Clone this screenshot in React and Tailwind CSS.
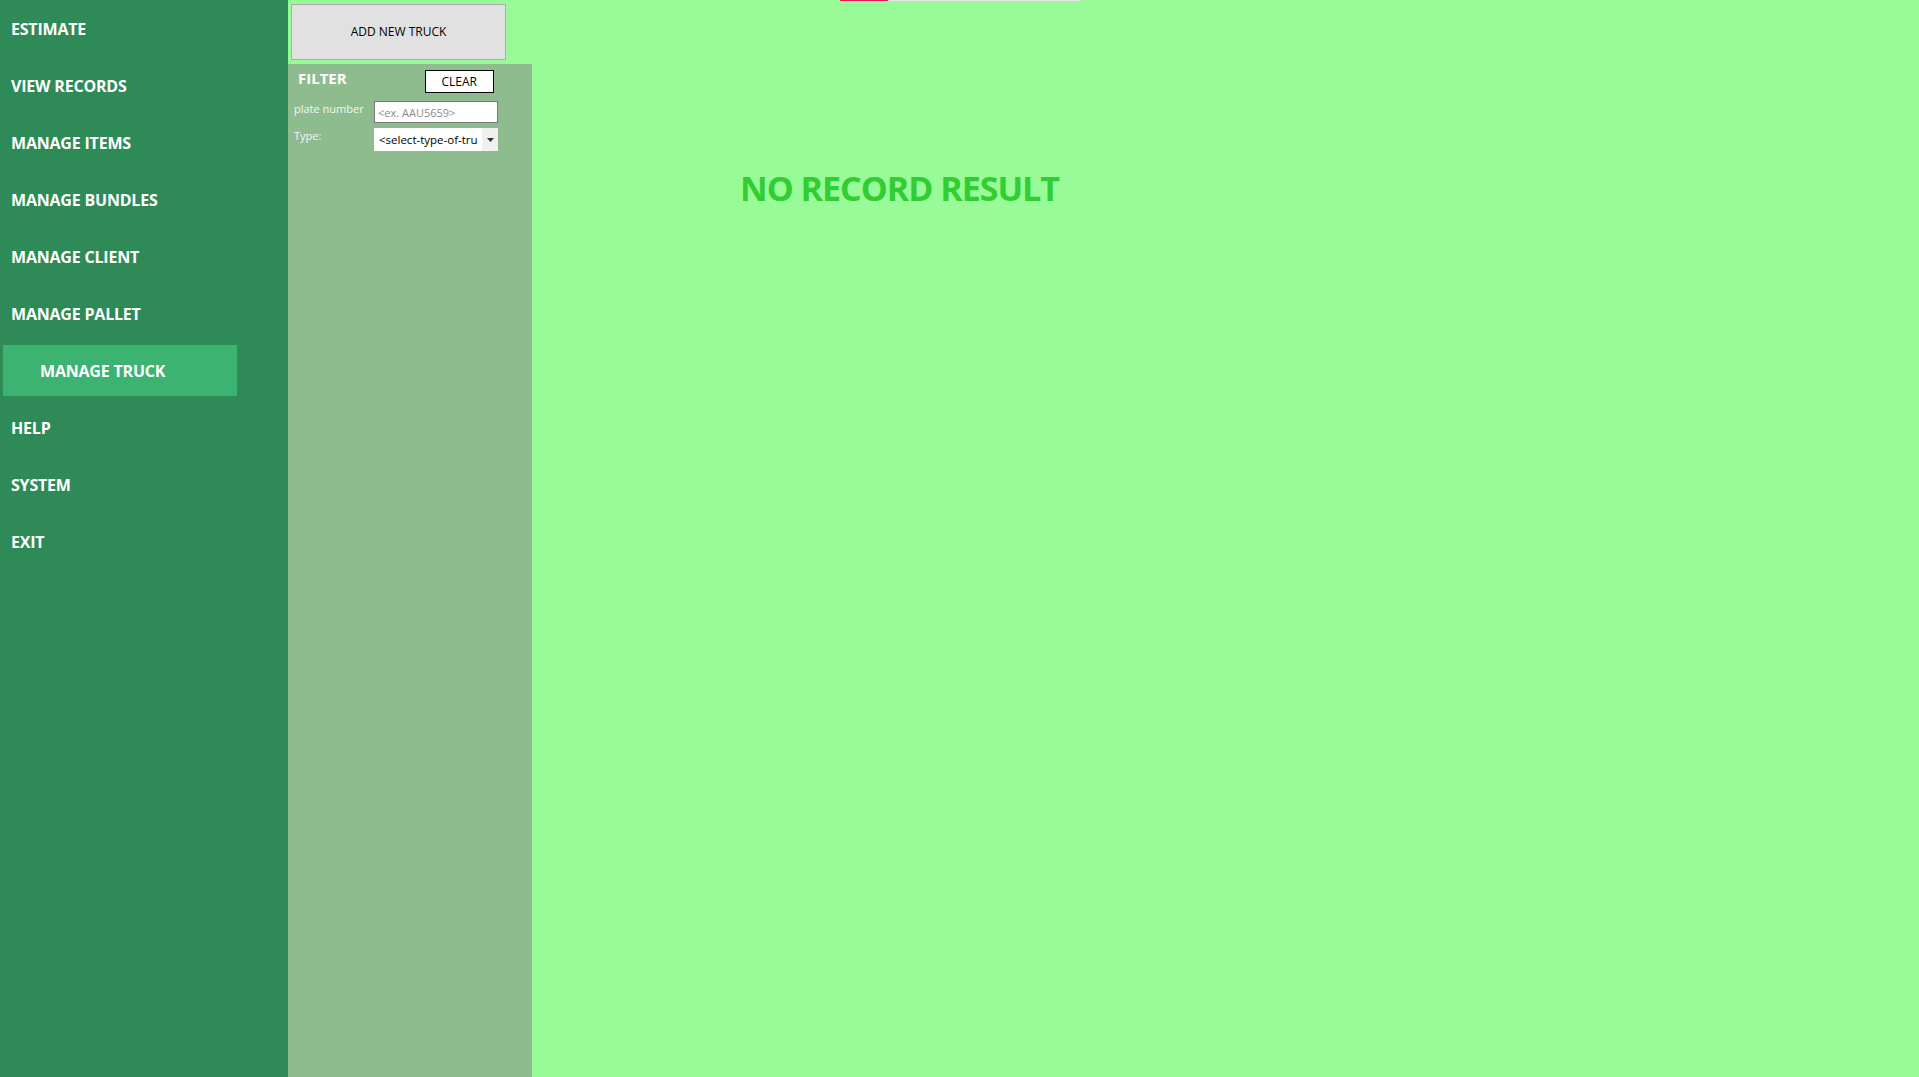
import React, { useState } from 'react';

const MENU = [
    'ESTIMATE',
    'VIEW RECORDS',
    'MANAGE ITEMS',
    'MANAGE BUNDLES',
    'MANAGE CLIENT',
    'MANAGE PALLET',
    'MANAGE TRUCK',
    'HELP',
    'SYSTEM',
    'EXIT',
];

const SideItem = ({ label, active, onClick }) => (
    <div className="h-[57px] flex items-center">
        {active ? (
            <button
                onClick={onClick}
                className="ml-[3px] w-[234px] h-[51px] bg-[#3cb371] text-left pl-[37px] text-white font-bold text-[16px] tracking-[-0.2px]"
            >
                {label}
            </button>
        ) : (
            <button onClick={onClick} className="pl-[11px] text-left text-white font-bold text-[16px] tracking-[-0.2px]">
                {label}
            </button>
        )}
    </div>
);

const App = () => {
    const [active, setActive] = useState('MANAGE TRUCK');
    const [plate, setPlate] = useState('');

    return (
        <div className="relative flex w-[1919px] h-[1077px] overflow-hidden font-['Open_Sans',sans-serif] bg-[#98fb98]">
            {/* top progress line */}
            <div className="absolute top-0 left-[840px] flex h-[1px]">
                <div className="w-[48px] bg-[#e3165b]" />
                <div className="w-[193px] bg-[#e6e6e6]" />
            </div>

            {/* Sidebar */}
            <div className="w-[288px] shrink-0 bg-[#2e8b57]">
                {MENU.map(m => (
                    <SideItem key={m} label={m} active={active === m} onClick={() => setActive(m)} />
                ))}
            </div>

            {/* Filter column */}
            <div className="w-[244px] shrink-0 flex flex-col">
                <div className="h-[64px] pt-[4px] pl-[3px]">
                    <button className="w-[215px] h-[56px] bg-[#e1e1e1] border border-[#adadad] text-[12px] text-black">
                        ADD NEW TRUCK
                    </button>
                </div>
                <div className="flex-1 bg-[#8fbc8f]">
                    <div className="flex items-start pt-[2px]">
                        <div className="pl-[10px] pt-[1px] text-white font-bold text-[15px]">FILTER</div>
                        <button
                            onClick={() => setPlate('')}
                            className="ml-[78px] mt-[4px] w-[69px] h-[23px] bg-white border border-black text-[12px] text-black"
                        >
                            CLEAR
                        </button>
                    </div>
                    <div className="flex items-center mt-[8px]">
                        <div className="w-[86px] pl-[6px] text-[11px] text-[#f4f4f4] self-start">plate number</div>
                        <input
                            value={plate}
                            onChange={e => setPlate(e.target.value)}
                            placeholder="<ex. AAU5659>"
                            className="w-[124px] h-[22px] bg-white border border-[#7a7a7a] px-[3px] text-[11px] text-black placeholder:text-[#8a8a8a] outline-none"
                        />
                    </div>
                    <div className="flex items-center mt-[5px]">
                        <div className="w-[86px] pl-[6px] text-[11px] text-[#f4f4f4] self-start">Type:</div>
                        <div className="w-[124px] h-[23px] bg-white flex items-center">
                            <span className="flex-1 pl-[5px] text-[11.5px] text-black overflow-hidden whitespace-nowrap">&lt;select-type-of-tru</span>
                            <span className="w-[16px] h-full bg-[#f0f0f0] flex items-center justify-center">
                                <svg width="7" height="4" viewBox="0 0 7 4"><path d="M0 0h7L3.5 4z" fill="#333" /></svg>
                            </span>
                        </div>
                    </div>
                </div>
            </div>

            {/* Main */}
            <div className="flex-1">
                <div className="ml-[208px] mt-[168px] text-[34px] font-bold text-[#32cd32] leading-[1.2] tracking-[-1px]">
                    NO RECORD RESULT
                </div>
            </div>
        </div>
    );
};

export default App;
